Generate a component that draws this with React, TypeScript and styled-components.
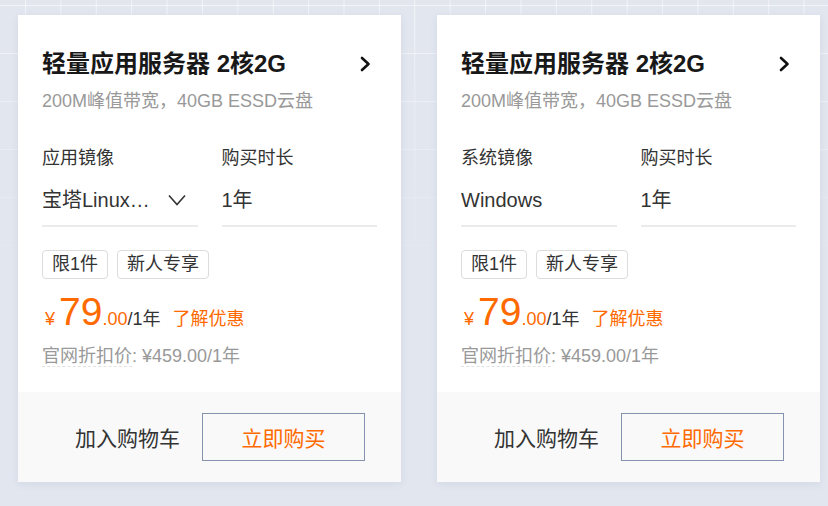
import React from "react";
import styled, { createGlobalStyle } from "styled-components";

const Global = createGlobalStyle`
  html, body { margin: 0; padding: 0; }
  body {
    width: 828px;
    height: 506px;
    overflow: hidden;
    font-family: "Liberation Sans", "Noto Sans CJK SC", sans-serif;
    background-color: #e2e6ef;
    background-image:
      linear-gradient(rgba(226,230,239,0) 0px, #e2e6ef 280px),
      linear-gradient(90deg, rgba(255,255,255,0.55) 1px, transparent 1px),
      linear-gradient(rgba(255,255,255,0.55) 1px, transparent 1px);
    background-size: 100% 100%, 35.4px 48px, 35.4px 48px;
    background-position: 0 0, 25px 5px, 25px 5px;
  }
`;

const Page = styled.div`
  display: flex;
  gap: 36px;
  padding: 15px 0 0 18px;
`;

const Card = styled.div`
  width: 383px;
  height: 467px;
  background: #fff;
  box-shadow: 0 2px 8px rgba(40, 60, 100, 0.08);
  display: flex;
  flex-direction: column;
`;

const Body = styled.div`
  padding: 33px 24px 0;
  display: flex;
  flex-direction: column;
`;

const TitleRow = styled.div`
  display: flex;
  align-items: center;
  justify-content: space-between;
  height: 32px;
`;

const Title = styled.div`
  font-size: 24px;
  font-weight: 700;
  color: #181818;
  line-height: 32px;
`;

const Subtitle = styled.div`
  margin-top: 8px;
  font-size: 18px;
  line-height: 26px;
  color: #999;
`;

const Fields = styled.div`
  margin-top: 31px;
  display: grid;
  grid-template-columns: 1fr 1fr;
  column-gap: 24px;
`;

const Field = styled.div`
  display: flex;
  flex-direction: column;
  min-width: 0;
`;

const Label = styled.div`
  font-size: 18px;
  line-height: 26px;
  color: #333;
`;

const Value = styled.div`
  margin-top: 15px;
  display: flex;
  align-items: center;
  gap: 12px;
  font-size: 20px;
  line-height: 28px;
  color: #333;
  padding-bottom: 11px;
  border-bottom: 2px solid #ebebeb;
`;

const ValueText = styled.span`
  flex: 1;
  min-width: 0;
  white-space: nowrap;
  overflow: hidden;
  text-overflow: ellipsis;
`;

const DownIcon = styled.svg`
  flex: none;
  margin-right: 12px;
`;

const Tags = styled.div`
  margin-top: 23px;
  display: flex;
  gap: 9px;
`;

const Tag = styled.div`
  height: 29px;
  box-sizing: border-box;
  padding: 0 9px;
  border: 1px solid #dcdcdc;
  border-radius: 4px;
  font-size: 18px;
  line-height: 27px;
  color: #333;
`;

const PriceRow = styled.div`
  margin-top: 12px;
  display: flex;
  align-items: baseline;
  height: 42px;
  color: #ff6a00;
`;

const Yen = styled.span`
  font-size: 18px;
  margin: 0 4px 0 3px;
`;

const Big = styled.span`
  font-size: 39px;
  line-height: 42px;
`;

const Small = styled.span`
  font-size: 18px;
`;

const Per = styled.span`
  font-size: 18px;
  color: #333;
`;

const Promo = styled.span`
  font-size: 18px;
  margin-left: 12px;
`;

const Origin = styled.div`
  margin-top: 10px;
  font-size: 18px;
  line-height: 26px;
  color: #999;
`;

const Dashed = styled.span`
  border-bottom: 1px dashed #e2e2e2;
`;

const Footer = styled.div`
  margin-top: auto;
  height: 90px;
  background: #f9f9f9;
  display: flex;
  align-items: center;
  justify-content: flex-end;
  gap: 22px;
  padding-right: 36px;
`;

const CartLink = styled.span`
  font-size: 21px;
  color: #333;
`;

const BuyButton = styled.button`
  width: 163px;
  height: 48px;
  background: transparent;
  border: 1px solid #8492ad;
  font-family: inherit;
  font-size: 21px;
  color: #ff6a00;
  cursor: pointer;
`;

type Product = { imageLabel: string; image: string };

const products: Product[] = [
  { imageLabel: "应用镜像", image: "宝塔Linux面板" },
  { imageLabel: "系统镜像", image: "Windows" },
];

const ProductCard = ({ p }: { p: Product }) => {
  const dropdown = p.imageLabel === "应用镜像";
  return (
    <Card>
      <Body>
        <TitleRow>
          <Title>轻量应用服务器 2核2G</Title>
          <svg width="12" height="18" viewBox="0 0 12 18" style={{ marginRight: 6 }}>
            <path d="M3 3 L9.5 9 L3 15" fill="none" stroke="#111" strokeWidth="2.6" strokeLinecap="round" strokeLinejoin="round" />
          </svg>
        </TitleRow>
        <Subtitle>200M峰值带宽，40GB ESSD云盘</Subtitle>
        <Fields>
          <Field>
            <Label>{p.imageLabel}</Label>
            <Value>
              <ValueText>{p.image}</ValueText>
              {dropdown && (
                <DownIcon width="18" height="12" viewBox="0 0 18 12">
                  <path d="M1 1.5 L9 10.5 L17 1.5" fill="none" stroke="#333" strokeWidth="1.6" />
                </DownIcon>
              )}
            </Value>
          </Field>
          <Field>
            <Label>购买时长</Label>
            <Value>
              <ValueText>1年</ValueText>
            </Value>
          </Field>
        </Fields>
        <Tags>
          <Tag>限1件</Tag>
          <Tag>新人专享</Tag>
        </Tags>
        <PriceRow>
          <Yen>¥</Yen>
          <Big>79</Big>
          <Small>.00</Small>
          <Per>/1年</Per>
          <Promo>了解优惠</Promo>
        </PriceRow>
        <Origin>
          <Dashed>官网折扣价</Dashed>: ¥459.00/1年
        </Origin>
      </Body>
      <Footer>
        <CartLink>加入购物车</CartLink>
        <BuyButton>立即购买</BuyButton>
      </Footer>
    </Card>
  );
};

export default function App() {
  return (
    <>
      <Global />
      <Page>
        {products.map((p) => (
          <ProductCard key={p.imageLabel} p={p} />
        ))}
      </Page>
    </>
  );
}
